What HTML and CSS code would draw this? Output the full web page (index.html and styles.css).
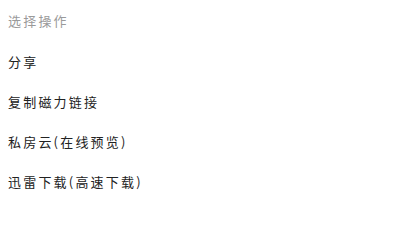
FILE: index.html
```html
<!DOCTYPE html>
<html lang="zh-CN">
<head>
<meta charset="utf-8">
<link rel="stylesheet" href="styles.css">
</head>
<body>
<div class="sheet">
  <div class="title">选择操作</div>
  <div class="item">分享</div>
  <div class="item">复制磁力链接</div>
  <div class="item">私房云(在线预览)</div>
  <div class="item">迅雷下载(高速下载)</div>
</div>
</body>
</html>
```
FILE: styles.css
```css
html, body {
  margin: 0;
  padding: 0;
  background: #ffffff;
}
.sheet {
  display: flex;
  flex-direction: column;
  padding: 1px 0 0 8px;
  font-family: "Noto Sans CJK SC", "Noto Sans", sans-serif;
  font-size: 13px;
  letter-spacing: 2.2px;
}
.title {
  height: 40px;
  line-height: 40px;
  color: #9a9a9a;
}
.item {
  height: 40px;
  line-height: 42px;
  color: #222222;
}
```
